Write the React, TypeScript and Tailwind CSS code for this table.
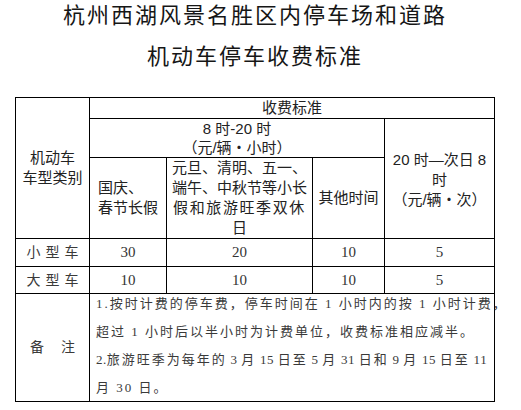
import React from "react";

const head = "font-['Liberation_Sans','Noto_Sans_CJK_SC',sans-serif] text-[15px] text-[#222]";
const serif = "font-['Liberation_Serif','Noto_Sans_CJK_SC',serif] text-[15px] text-[#333]";
const cell = "border border-black p-0 text-center align-middle";

const rows = [
  { name: "小型车", vals: ["30", "20", "10", "5"], h: "h-[28px]" },
  { name: "大型车", vals: ["10", "10", "10", "5"], h: "h-[27px]" },
];

const notes = [
  { text: "1.按时计费的停车费，停车时间在 1 小时内的按 1 小时计费，", tight: false },
  { text: "超过 1 小时后以半小时为计费单位，收费标准相应减半。", tight: false },
  { text: "2.旅游旺季为每年的 3 月 15 日至 5 月 31 日和 9 月 15 日至 11", tight: true },
  { text: "月 30 日。", tight: false },
];

// digits and spaces in the long date line are set tighter so it fits the cell
function NoteLine({ text, tight }: { text: string; tight: boolean }) {
  if (!tight) return <div className="whitespace-nowrap">{text}</div>;
  const parts = text.split(/([0-9. ]+)/);
  return (
    <div className="whitespace-pre">
      {parts.map((p, i) =>
        /^[0-9. ]+$/.test(p) ? (
          <span key={i} className="tracking-[0.5px]">
            {p}
          </span>
        ) : (
          <span key={i}>{p}</span>
        )
      )}
    </div>
  );
}

export default function App() {
  return (
    <div className="w-[521px] h-[410px] bg-white">
      <div className="ml-[15px] w-[480px] pt-[1px] pb-[27px] text-center font-['Noto_Sans_CJK_SC',sans-serif] text-[22px] tracking-[2px] text-[#161616]">
        <div className="-mt-[4px] leading-[32px]">杭州西湖风景名胜区内停车场和道路</div>
        <div className="mt-[9px] leading-[32px]">机动车停车收费标准</div>
      </div>

      <table className="ml-[15px] w-[480px] table-fixed border-collapse border border-black">
        <colgroup>
          <col className="w-[74px]" />
          <col className="w-[77px]" />
          <col className="w-[146px]" />
          <col className="w-[72px]" />
          <col className="w-[110px]" />
        </colgroup>
        <tbody className={head}>
          <tr className="h-[20px]">
            <td rowSpan={3} className={`${cell} leading-[20px]`}>
              机动车
              <br />
              车型类别
            </td>
            <td colSpan={4} className={`${cell} leading-[20px]`}>
              收费标准
            </td>
          </tr>
          <tr className="h-[39px]">
            <td colSpan={3} className={`${cell} leading-[19px]`}>
              8 时-20 时
              <br />
              （元/辆・小时）
            </td>
            <td rowSpan={2} className={`${cell} leading-[20px] pt-[2px]`}>
              20 时—次日 8
              <br />
              时
              <br />
              （元/辆・次）
            </td>
          </tr>
          <tr className="h-[79px]">
            <td className={`${cell} leading-[20px]`}>
              <div className="inline-block text-left">
                国庆、
                <br />
                春节长假
              </div>
            </td>
            <td className={`${cell} leading-[20px]`}>
              <div>元旦、清明、五一、</div>
              <div>端午、中秋节等小长</div>
              <div className="tracking-[1.6px]">假和旅游旺季双休</div>
              <div>日</div>
            </td>
            <td className={`${cell} leading-[20px]`}>其他时间</td>
          </tr>
          {rows.map((r) => (
            <tr key={r.name} className={r.h}>
              <td className={`${cell} pl-[5px] text-[14px] tracking-[5px] text-[#3a3a3a]`}>{r.name}</td>
              {r.vals.map((v, i) => (
                <td key={i} className={`${cell} ${serif}`}>
                  {v}
                </td>
              ))}
            </tr>
          ))}
          <tr className="h-[108px]">
            <td className={`${cell} text-[14px] text-[#3a3a3a]`}>
              <span className="mr-[17px]">备</span>注
            </td>
            <td colSpan={4} className={`${cell} text-left align-top`}>
              <div className="flex flex-col gap-[8px] pl-[6px] font-['Liberation_Serif','Noto_Sans_CJK_SC',serif] text-[13px] leading-[20px] tracking-[2px] text-[#3a3a3a]">
                {notes.map((n) => (
                  <NoteLine key={n.text} text={n.text} tight={n.tight} />
                ))}
              </div>
            </td>
          </tr>
        </tbody>
      </table>
    </div>
  );
}
